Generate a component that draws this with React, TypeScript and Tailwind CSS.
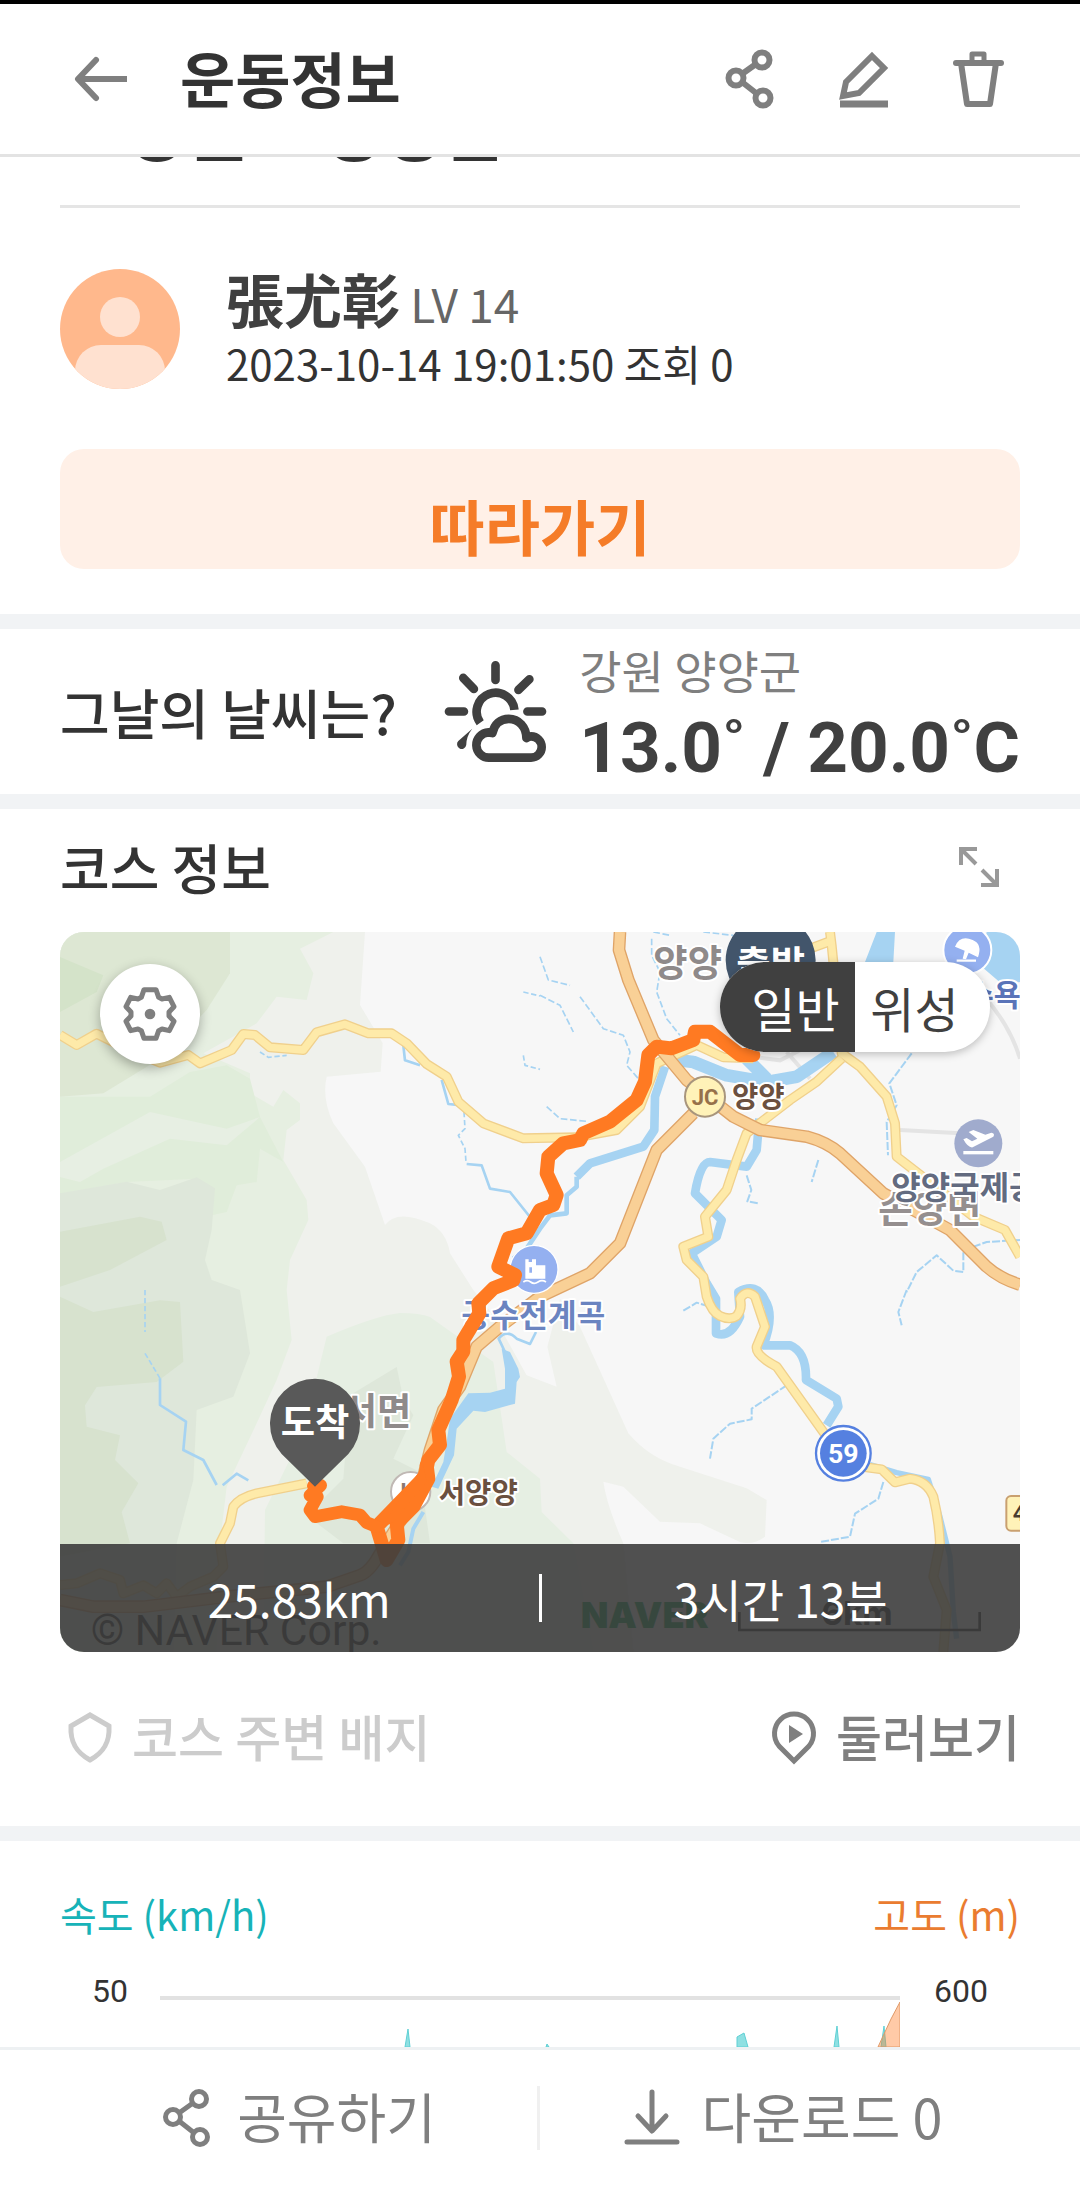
import React, { useState } from 'react';

function ShareIcon({ thin = false }: { thin?: boolean }) {
  return (
    <svg viewBox="0 0 60 60" className="h-[60px] w-[60px]" fill="none" stroke="currentColor" strokeWidth={thin ? 5 : 6}>
      <path d="M22 25L36 15M22 33L36 44" />
      <circle cx="42" cy="11" r="7.5" />
      <circle cx="16" cy="29" r="7.5" />
      <circle cx="43" cy="49" r="7.5" />
    </svg>
  );
}

function WeatherIcon() {
  return (
    <svg
      viewBox="130 60 310 310"
      className="h-[103px] w-[103px] shrink-0"
      fill="none"
      stroke="#404040"
      strokeWidth="26"
    >
      <path strokeLinecap="round" d="M285 76V120M188 114L220 147M387 118L354 150M145 215H190M381 215H425" />
      <path d="M239 249A57 57 0 1 1 342 210" />
      <path
        strokeLinejoin="round"
        d="M267 354H392A32 32 0 0 0 392 290Q384 290 378 295C378 262 355 237 325 237C300 237 281 252 276 280Q270 278 264 278A38 38 0 0 0 267 354Z"
      />
      <path fill="#404040" stroke="none" d="M215 267L173 304A14 14 0 1 0 197 316Q197 290 215 267Z" />
    </svg>
  );
}

const yellowRoads = [
  'M0 309L50 339L110 305L200 350L300 392L385 369L420 394L515 354L550 306L585 309L630 346L730 354L770 301L855 277L925 304L995 304L1040 334L1100 396L1160 434L1195 509L1270 574L1390 619L1550 616L1670 594L1740 524L1790 394L1910 339L1990 376L2080 379',
  'M2310 0L2315 40L2320 90L2345 364L2400 404L2480 494L2505 574L2510 674L2600 744L2740 854L2835 894L2880 974',
  'M2345 379L2270 449L2190 504L2060 604L2030 684L2000 774L1935 854L1945 914L1870 944L1880 984L1930 1034L1940 1094Q1955 1140 1980 1152Q2010 1166 2030 1152Q2048 1130 2040 1100Q2060 1070 2085 1094L2115 1184L2090 1244Q2085 1270 2150 1304L2300 1514L2420 1606L2465 1612L2505 1651L2550 1640Q2600 1645 2620 1694Q2636 1760 2640 1834L2620 1934L2660 2034L2650 2160',
  'M740 1654L590 1684Q540 1696 520 1724L510 1774L480 1834L490 1904L460 1934L390 1964L350 1994L320 1954L290 1984L250 1960L190 1984L180 1944L120 1924L50 1954L0 1959',
  'M2250 50L2320 24',
];

const highways = [
  'M1680 0L1677 54L1705 144L1780 324L1880 444L2020 554L2100 594L2240 614Q2300 630 2340 664L2470 784L2670 894L2780 1004Q2820 1040 2880 1058',
  'M1900 544L1790 654L1680 934L1590 1024L1440 1094L1320 1184L1250 1244L1200 1364L1150 1434L1110 1554L1080 1674L960 1864Q930 1920 900 1930L800 1964L500 1994L250 2024L100 2024L0 2004',
];

const routePath =
  'M2080 369H2040L1950 299H1905L1900 324L1835 349L1790 344L1765 369L1755 449L1730 504L1650 569L1570 604L1560 624L1510 634L1465 674L1460 724L1490 789L1480 819L1440 834L1400 904L1345 919L1315 1004L1365 1029L1360 1045L1300 1069L1255 1114L1258 1144L1210 1224V1258L1190 1289L1197 1334L1175 1404L1135 1494L1140 1539L1105 1584L1095 1634L950 1784L980 1884L1015 1824L1010 1774L1060 1724L1105 1640L1100 1600';

function CourseMap() {
  return (
    <svg viewBox="0 0 2880 2160" className="block w-full" role="img" aria-label="코스 지도">
      <rect width="2880" height="2160" fill="#f7f7f7" />

      {/* terrain */}
      <path
        fill="#eff1ec"
        d="M0 0H915L900 219L945 294L968 334L962 419L800 434Q785 500 820 574L915 704L975 879Q1010 830 1110 874Q1160 900 1170 964L1240 1074L1300 1150L1400 1330L1490 1364L1462 1244L1500 1100L1560 1184L1705 1504Q1770 1580 1860 1604L2060 1669L2120 1704L2115 1814Q2080 1840 2040 1830L1920 1774L1800 1769L1690 1664L1630 1649Q1640 1720 1690 1834L1720 2160H0Z"
      />
      <path
        fill="#e6efe1"
        d="M0 0H820L720 50L760 124L740 204L650 194L590 274L430 364L570 424V484L640 524L670 474L720 514V564L680 594L670 684L740 804L745 864L690 984L680 1074L695 1224L650 1344L590 1474L500 1664L480 1834L470 2160H0Z"
      />
      <path fill="#e0edda" d="M0 494L270 494L390 420L500 400L570 440L600 555L670 690L600 650L590 750L530 760L500 840L455 850L410 740L200 750L0 785Z" />
      <path fill="#e7efe3" d="M0 690L270 540L500 590L600 555L500 640L330 620L130 710L60 750L0 735Z" />
      <path fill="#dde7d3" d="M0 0H510V124L440 234L300 380L130 484L0 494Z" />
      <path fill="#d4e3c9" d="M0 75L130 130L110 180L0 240Z" />
      <path
        fill="#dee7da"
        d="M0 784L200 749L300 774L410 736L465 769L455 894L435 984L455 1044L540 1074L570 1264L520 1394L410 1434L400 1644L350 1834L340 2160H0Z"
      />
      <path fill="#d7e2ce" d="M0 899L240 854L305 869L320 924L150 1014L0 1064Z" />
      <path
        fill="#d7e2ce"
        d="M0 1094L100 1140L300 1105L360 1110L370 1289L290 1350L110 1365L75 1420L80 1484L180 1510L165 1584L235 1654L185 1740L210 1834L0 1874Z"
      />
      <path
        fill="#e6efe3"
        d="M800 1214Q950 1150 1020 1143Q1080 1143 1110 1155L1300 1290L1340 1560L1440 1640L1445 1740L1540 1834L1600 2160H610L615 1734L730 1500Z"
      />
      <path fill="#dee7da" d="M870 1390L1010 1305L1030 1400L1060 1450L1000 1580L1080 1620L1110 1834H850L740 1750L850 1640Z" />
      <path fill="none" stroke="#e4e4e4" strokeWidth="12" d="M2080 375L2160 385L2220 355M2180 360L2250 440M2520 594L2700 604M2770 190Q2850 280 2880 380" />

      {/* rivers */}
      <g fill="none" stroke="#a6d3f2" strokeLinejoin="round">
        <path fill="#a6d3f2" stroke="none" d="M2450 0H2505L2500 90H2415ZM2780 0H2880V150L2830 160L2760 100Z" />
        <path strokeWidth="38" d="M1850 384L1900 390L2000 430L2120 450L2210 434L2320 360M2060 380L2120 440" />
        <path strokeWidth="26" d="M1815 404L1785 494L1783 594L1750 644L1590 694L1550 734" />
        <path strokeWidth="14" d="M1550 734V764L1520 790V844L1470 850L1440 890L1400 950L1360 980" />
        <path strokeWidth="26" d="M2098 560L2090 654L2060 704L1950 690Q1920 690 1905 784L1985 864L1970 914L1895 964L1940 1054L1968 1100L1968 1204Q2010 1220 2040 1154L2035 1080Q2090 1050 2115 1104Q2145 1150 2110 1240L2190 1240Q2240 1260 2238 1344L2330 1400L2335 1424L2300 1480" />
        <path strokeWidth="16" d="M2430 1598L2510 1622L2605 1642L2640 1754L2670 1874L2680 2040L2690 2120" />
        <path
          fill="#a6d3f2"
          stroke="none"
          d="M1325 1250L1350 1260L1375 1310L1380 1335L1370 1350L1365 1415L1275 1440L1240 1436L1190 1490L1182 1570L1135 1670L1115 1664L1150 1590L1160 1530L1170 1460L1225 1384L1290 1382L1335 1370L1335 1310Z"
        />
        <path strokeWidth="12" d="M1090 1740L1060 1790L1045 1860L1020 1900" />
        <path strokeWidth="8" d="M1335 1260L1316 1220Q1340 1190 1370 1220L1410 1236L1428 1200M1145 444L1165 516L1205 520" />
        <path strokeWidth="8" d="M1220 696L1265 700L1290 770L1350 780L1410 855M1030 340L1035 385L1080 400M300 1339V1419L378 1469L370 1554L430 1584L470 1659M488 1660L530 1625L565 1645" />
        <path strokeWidth="5" strokeDasharray="16 8" d="M255 1074V1200M255 1264L300 1339M1212 540L1215 590L1195 610L1215 650L1218 690M600 360L625 376L680 370M1390 370L1395 400L1440 412M1390 180L1440 192" />
        <path strokeWidth="5" strokeDasharray="20 8" d="M1440 74L1465 144L1530 160M1560 194L1630 290L1690 310L1710 360L1700 400L1735 440M1775 20V70L1800 120L1790 180L1820 260L1860 310M1440 190L1500 220L1540 300M1460 524L1500 560L1580 568M1780 0L1830 10M1930 0L2020 10" />
        <path strokeWidth="6" strokeDasharray="24 6" d="M2555 364L2488 454L2510 520L2480 570L2484 670M2060 730L2074 774L2062 808L2095 814M2275 684L2255 750M2180 1360L2075 1430V1462L2010 1475L1960 1520L1950 1580M2470 1650L2455 1700L2385 1745L2370 1814L2280 1830M2880 924L2780 930L2710 955V1020L2680 1016L2630 970L2570 1020L2540 1080M2540 1074L2515 1140L2525 1180M1870 1136L1910 1112L1950 1124" />
      </g>

      {/* roads */}
      <g fill="none" strokeLinejoin="round">
        {yellowRoads.map((d) => (
          <path key={d} d={d} stroke="#f0d08c" strokeWidth="30" />
        ))}
        {yellowRoads.map((d) => (
          <path key={d} d={d} stroke="#feeaa9" strokeWidth="22" />
        ))}
        {highways.map((d) => (
          <path key={d} d={d} stroke="#dfa468" strokeWidth="38" />
        ))}
        {highways.map((d) => (
          <path key={d} d={d} stroke="#f9d096" strokeWidth="30" />
        ))}
      </g>

      {/* places */}
      <circle cx="2722" cy="54" r="72" fill="#94b0f0" stroke="#fff" strokeWidth="6" />
      <path fill="#fff" d="M2685 44Q2700 8 2738 24Q2768 36 2754 76L2726 62L2718 82L2708 80L2714 56Z" />
      <path stroke="#fff" strokeWidth="7" d="M2690 86H2748" />
      <circle cx="2755" cy="634" r="72" fill="#a0abcd" />
      <path stroke="#fff" strokeWidth="10" d="M2710 662H2800" />
      <path fill="#fff" d="M2710 622L2720 618L2736 628L2752 620L2726 600L2740 594L2776 608L2794 602Q2806 604 2800 614L2738 646Q2724 648 2710 622Z" />
      <circle cx="1422" cy="1012" r="72" fill="#94b0f0" stroke="#fff" strokeWidth="4" />
      <path fill="#fff" d="M1396 982H1406V990H1416V982H1428V1000H1456V1040H1396ZM1408 1006V1022H1416V1006Z" fillRule="evenodd" />
      <path fill="none" stroke="#fff" strokeWidth="5" d="M1390 1050Q1402 1042 1412 1050T1434 1050T1458 1050" />
      <circle cx="1935" cy="494" r="60" fill="#fff2b8" stroke="#a8957c" strokeWidth="6" />
      <circle cx="1052" cy="1679" r="59" fill="#fff" stroke="#c0b8b4" strokeWidth="6" />
      <circle cx="2350" cy="1564" r="82" fill="#fff" stroke="#5580e0" strokeWidth="7" />
      <circle cx="2350" cy="1564" r="70" fill="#5580e0" />
      <rect x="2839" y="1692" width="100" height="104" rx="14" fill="#fff2b8" stroke="#c9a070" strokeWidth="6" />

      <g className="font-bold" stroke="#fff" strokeWidth="12" paintOrder="stroke" strokeLinejoin="round">
        <text x="1780" y="136" fontSize="112" fill="#8f8a8a">양양</text>
        <text x="2455" y="874" fontSize="112" fill="#958f8f">손양면</text>
        <text x="2494" y="802" fontSize="96" fill="#636b80">양양국제공항</text>
        <text x="2016" y="526" fontSize="86" fill="#6b5040">양양</text>
        <text x="1136" y="1714" fontSize="86" fill="#6b5040">서양양</text>
        <text x="2720" y="222" fontSize="88" fill="#5a74b8">수욕장</text>
        <text x="1204" y="1184" fontSize="94" fill="#6b84c0">공수전계곡</text>
        <text x="848" y="1480" fontSize="112" fill="#8f8a8a">서면</text>
      </g>
      <g className="font-['Roboto',sans-serif] font-bold" textAnchor="middle">
        <text x="1935" y="518" fontSize="66" fill="#96704a">JC</text>
        <text x="1052" y="1702" fontSize="66" fill="#8a7a74">IC</text>
        <text x="2350" y="1592" fontSize="80" fill="#fff">59</text>
        <text x="2896" y="1768" fontSize="66" fill="#4a3c30">44</text>
      </g>

      {/* recorded route */}
      <path d={routePath} fill="none" stroke="#ff7a22" strokeWidth="42" strokeLinejoin="round" strokeLinecap="round" />
      <path
        d="M950 1784L920 1772L900 1749L845 1739L765 1754L750 1734L772 1694L750 1690L782 1660L760 1662"
        fill="none"
        stroke="#ff7a22"
        strokeWidth="38"
        strokeLinejoin="round"
        strokeLinecap="round"
      />
      <path d="M1090 1600L960 1790L1000 1770L1100 1650Z" fill="#ff7a22" />

      <path fill="#42556b" d="M2132 280L2036 180A135 135 0 1 1 2228 180Z" />
      <path fill="#595959" d="M765 1664L665 1566A135 135 0 1 1 865 1566Z" />
      <g className="font-bold" fill="#fff" textAnchor="middle">
        <text x="2132" y="138" fontSize="112">출발</text>
        <text x="765" y="1513" fontSize="112">도착</text>
      </g>

      {/* attribution and scale bar */}
      <text x="92" y="2138" fontSize="128" fill="#222" className="font-['Roboto',sans-serif]">© NAVER Corp.</text>
      <text x="1562" y="2088" fontSize="108" fill="#03a34a" className="font-['Inter',sans-serif] font-black">NAVER</text>
      <text x="2284" y="2078" fontSize="100" fill="#222" className="font-['Inter',sans-serif] font-bold">6km</text>
      <path fill="none" stroke="#222" strokeWidth="8" d="M2038 2040V2094H2759V2040" />
    </svg>
  );
}

function MapPanel() {
  const [satellite, setSatellite] = useState(false);

  return (
    <div className="relative overflow-hidden rounded-3xl">
      <CourseMap />
      <button
        aria-label="지도 설정"
        className="absolute top-8 left-10 flex h-[100px] w-[100px] items-center justify-center rounded-full bg-white shadow-[0_4px_12px_rgba(0,0,0,0.3)]"
      >
        <svg viewBox="180 166 180 180" className="h-[60px] w-[60px]" fill="none" stroke="#7f7f7f" strokeWidth="15" strokeLinejoin="round">
          <path d="M252 183H288L296 206L306 211L328 206L342 234L327 250V262L342 278L328 306L306 301L296 306L288 329H252L244 306L234 301L212 306L198 278L213 262V250L198 234L212 206L234 211L244 206Z" />
          <circle cx="270" cy="256" r="16" fill="#7f7f7f" stroke="none" />
        </svg>
      </button>
      <div className="absolute top-[30px] right-[30px] flex h-[90px] w-[270px] overflow-hidden rounded-full bg-white text-[48px] leading-[72px] shadow-[0_2px_8px_rgba(0,0,0,0.25)]">
        <button
          aria-pressed={!satellite}
          onClick={() => setSatellite(false)}
          className="flex-1 bg-[#404040] pl-4 text-white"
        >
          일반
        </button>
        <button aria-pressed={satellite} onClick={() => setSatellite(true)} className="flex-1 pr-4 text-[#404040]">
          위성
        </button>
      </div>
      <div className="absolute inset-x-0 bottom-0 flex h-[108px] items-center bg-[#3d3d3d]/90 text-[46px] text-white">
        <span className="flex-1 text-center">25.83km</span>
        <span className="h-12 w-[3px] bg-white" />
        <span className="flex-1 text-center">3시간 13분</span>
      </div>
    </div>
  );
}

export default function App() {
  return (
    <div className="flex min-h-screen flex-col bg-white font-['Noto_Sans_CJK_KR','Noto_Sans_CJK_TC',sans-serif] text-[#333]">
      <header className="sticky top-0 z-10 border-t-4 border-b-3 border-t-black border-b-[#e3e3e3] bg-white">
        <div className="flex h-[150px] items-center px-[72px] text-[#7f7f7f]">
          <button aria-label="뒤로" className="mr-12">
            <svg viewBox="0 0 60 60" className="h-[60px] w-[60px]" fill="none" stroke="currentColor" strokeWidth="6">
              <path strokeLinecap="round" strokeLinejoin="round" d="M24 11L6 30L24 49" />
              <path d="M6 30H55" />
            </svg>
          </button>
          <h1 className="flex-1 pb-1 text-[60px] leading-[80px] font-bold text-[#333]">운동정보</h1>
          <div className="flex gap-[54px]">
            <button aria-label="공유">
              <ShareIcon />
            </button>
            <button aria-label="수정">
              <svg viewBox="0 0 60 60" className="h-[60px] w-[60px]" fill="none" stroke="currentColor" strokeWidth="6">
                <path d="M38 7L50 19L25 44L9 47L12 33Z" />
                <path d="M6 55H54" strokeWidth="7" />
              </svg>
            </button>
            <button aria-label="삭제">
              <svg viewBox="0 0 60 60" className="h-[60px] w-[60px]" fill="none" stroke="currentColor" strokeWidth="6" strokeLinejoin="round">
                <path d="M8 14H53" strokeLinecap="round" />
                <path d="M24 12V5H36V12" strokeWidth="5" />
                <path d="M13 14L19 55H42L48 14" />
              </svg>
            </button>
          </div>
        </div>
      </header>

      <main className="flex-1">
        <section className="px-[60px] pb-[45px]">
          {/* course title, mostly scrolled under the header */}
          <div className="-mt-20 h-[131px] border-b-3 border-[#e5e5e5] pl-[66px]">
            <h2 className="text-[66px] leading-[100px] font-bold">강원도 양양군</h2>
          </div>
          <div className="flex h-[241px] items-center gap-[46px]">
            <svg viewBox="0 0 120 120" className="h-[120px] w-[120px] shrink-0">
              <clipPath id="avatar">
                <circle cx="60" cy="60" r="60" />
              </clipPath>
              <g clipPath="url(#avatar)">
                <rect width="120" height="120" fill="#ffb88c" />
                <circle cx="60" cy="48" r="20" fill="#ffe1d0" />
                <rect x="15" y="76" width="90" height="60" rx="26" fill="#ffe1d0" />
              </g>
            </svg>
            <div>
              <p className="text-[46px] leading-[64px] text-[#666]">
                <strong className="text-[58px] text-[#404040]">張尤彰</strong> LV 14
              </p>
              <p className="text-[42px] leading-[56px]">2023-10-14 19:01:50 조회 0</p>
            </div>
          </div>
          <button className="block h-[120px] w-full rounded-3xl bg-[#fff0e7] pt-8 text-[60px] leading-[88px] font-bold text-[#f57c28]">
            따라가기
          </button>
        </section>

        <section className="flex h-[195px] items-center justify-between border-y-[15px] border-[#f1f3f5] px-[60px]">
          <h2 className="text-[54px] font-medium">그날의 날씨는?</h2>
          <div className="flex items-center gap-8">
            <WeatherIcon />
            <div className="pt-2">
              <p className="text-[46px] leading-[64px] text-[#7f7f7f]">강원 양양군</p>
              <p className="font-['Roboto',sans-serif] text-[71px] leading-[93px] font-bold text-[#404040]">
                13.0˚ / 20.0˚C
              </p>
            </div>
          </div>
        </section>

        <section className="px-[60px]">
          <div className="flex h-[123px] items-center justify-between">
            <h2 className="pb-2 text-[54px] font-medium">코스 정보</h2>
            <button aria-label="지도 확대" className="mr-5 pb-2">
              <svg viewBox="0 0 42 42" className="h-[42px] w-[42px]" fill="none" stroke="#999" strokeWidth="4">
                <path d="M3 19V3H19M3 3L18 18M39 23V39H23M39 39L24 24" />
              </svg>
            </button>
          </div>
          <MapPanel />
          <div className="flex h-[174px] items-center justify-between pb-1 text-[50px] font-medium">
            <button className="flex items-center gap-3 text-[#ccc]">
              <svg viewBox="0 0 60 60" className="h-[60px] w-[60px]" fill="none" stroke="currentColor" strokeWidth="5">
                <path d="M30 8L49 19C50 36 43 46 30 53C17 46 10 36 11 19Z" />
              </svg>
              <span className="pb-1">코스 주변 배지</span>
            </button>
            <button className="flex items-center gap-3 text-[#7f7f7f]">
              <svg viewBox="0 0 60 60" className="h-[60px] w-[60px]" fill="none" stroke="currentColor" strokeWidth="5">
                <path d="M30 54L15 39A19.5 19.5 0 1 1 45 39Z" />
                <path d="M25 18L39 27L25 36Z" fill="currentColor" stroke="none" />
              </svg>
              <span className="pb-1">둘러보기</span>
            </button>
          </div>
        </section>

        <section className="border-t-[15px] border-[#f1f3f5] px-[60px] pt-[43px]">
          <div className="flex justify-between text-[40px] leading-[60px]">
            <h2 className="text-[#17b3b8]">속도 (km/h)</h2>
            <h2 className="text-[#ea7c30]">고도 (m)</h2>
          </div>
          <div className="mt-[31px] flex items-start font-['Roboto',sans-serif] text-[32px] leading-8">
            <span className="w-[100px] pr-8 text-right">50</span>
            <svg viewBox="0 0 740 52" preserveAspectRatio="none" className="mt-5 h-[52px] min-w-0 flex-1">
              <path d="M0 3H740" stroke="#e2e2e2" strokeWidth="4" />
              <g fill="#8fe0e2" stroke="#5fd0d4" strokeWidth="1">
                <path d="M245 52L248 34L250 52ZM386 52L387 49L389 52ZM577 52V42L584 38L588 52ZM674 52L677 31L679 52ZM721 52L724 31L726 52Z" />
              </g>
              <path d="M718 52L731 24L740 7V52Z" fill="#ff7a22" fillOpacity="0.4" stroke="#e09a68" strokeWidth="1" />
            </svg>
            <span className="w-[120px] pl-[34px]">600</span>
          </div>
        </section>
      </main>

      <footer className="sticky bottom-0 grid h-[138px] grid-cols-2 items-center border-t-3 border-[#eef1f3] bg-white text-[54px] leading-[68px] text-[#7f7f7f]">
        <button className="flex items-center justify-center gap-5 border-r-3 border-[#f0f0f0] pl-14">
          <ShareIcon thin />
          <span className="-mt-1">공유하기</span>
        </button>
        <button className="flex items-center justify-center gap-5 pr-14">
          <svg viewBox="0 0 60 60" className="h-[60px] w-[60px]" fill="none" stroke="currentColor" strokeWidth="5" strokeLinecap="round">
            <path d="M30 4V42M16 28L30 43L44 28M5 54H55" strokeLinejoin="round" />
          </svg>
          <span className="-mt-1">다운로드 0</span>
        </button>
      </footer>
    </div>
  );
}
